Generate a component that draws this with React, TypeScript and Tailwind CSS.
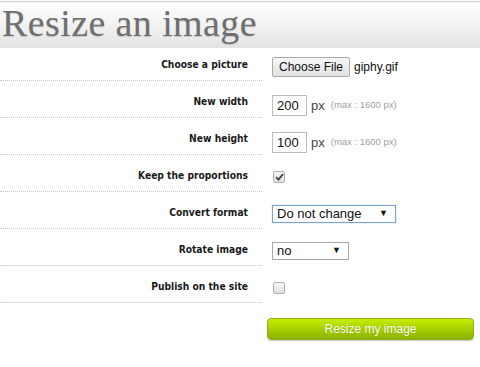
import React from "react";

const labelFont = { fontFamily: '"DejaVu Sans Condensed", "DejaVu Sans", sans-serif' };
const arial = { fontFamily: '"Liberation Sans", Arial, sans-serif' };

function Row({ label, first, children }: { label: string; first?: boolean; children?: React.ReactNode }) {
  return (
    <div className="flex">
      <div
        className={`w-[262px] shrink-0 flex items-center justify-end pr-[14px] border-b border-dotted border-[#c8c8c8] ${first ? "h-[33px] pt-[2px]" : "h-[37px] pt-[6px]"}`}
      >
        <span className="text-[10.2px] font-bold text-[#1a1a1a]" style={labelFont}>
          {label}
        </span>
      </div>
      <div className={`flex items-center pl-[10px] ${first ? "h-[33px] pt-[4px]" : "h-[37px] pt-[9px]"}`} style={arial}>
        {children}
      </div>
    </div>
  );
}

function Checkbox({ checked }: { checked?: boolean }) {
  return (
    <div className="w-[12px] h-[12px] rounded-[2px] border border-[#b0b0b0] bg-gradient-to-b from-[#f6f6f6] to-[#e0e0e0] flex items-center justify-center mt-[-3px] ml-[1px]">
      {checked && (
        <svg width="9" height="8" viewBox="0 0 9 8">
          <path d="M1 4.2 L3.4 6.6 L8 1.2" stroke="#444" strokeWidth="1.8" fill="none" />
        </svg>
      )}
    </div>
  );
}

function Select({ value, width, focused }: { value: string; width: string; focused?: boolean }) {
  return (
    <div
      className={`${width} h-[18px] flex items-center justify-between pl-[4px] pr-[7px] bg-white border ${focused ? "border-[#7da2ce] shadow-[0_0_1px_#9ebbe0]" : "border-[#a9a9a9]"} text-[13px] text-[#111] mt-[-3px]`}
    >
      <span className="leading-none">{value}</span>
      <span className="text-[9px] text-[#111]">▼</span>
    </div>
  );
}

function SizeInput({ value }: { value: string }) {
  return (
    <div className="flex items-center mt-[3px]">
      <div className="w-[35px] h-[21px] border border-[#bdbdbd] bg-white flex items-center pl-[4px] text-[13px] text-[#111]">
        {value}
      </div>
      <span className="ml-[4px] text-[13px] text-[#444]">px</span>
      <span className="ml-[6px] text-[9.5px] text-[#a0a0a0]">(max : 1600 px)</span>
    </div>
  );
}

export default function App() {
  return (
    <div className="w-[480px] h-[367px] bg-white overflow-hidden">
      <div className="h-[47px] border-t border-[#cfcfcf] mt-[1px] bg-gradient-to-b from-white to-[#e4e4e4] pl-[2px]">
        <h1
          className="text-[38px] leading-[42px] text-[#6f6f6f] tracking-[0.4px]"
          style={{ fontFamily: '"Liberation Serif", "Times New Roman", serif', textShadow: "0 1px 1px rgba(0,0,0,0.15)" }}
        >
          Resize an image
        </h1>
      </div>
      <Row label="Choose a picture" first>
        <div className="flex items-center">
          <div className="h-[20px] px-[6px] border border-[#a9a9a9] rounded-[2px] bg-gradient-to-b from-[#f7f7f7] to-[#e2e2e2] flex items-center text-[12px] text-[#111]">
            Choose File
          </div>
          <span className="ml-[4px] text-[12px] text-[#111]">giphy.gif</span>
        </div>
      </Row>
      <Row label="New width">
        <SizeInput value="200" />
      </Row>
      <Row label="New height">
        <SizeInput value="100" />
      </Row>
      <Row label="Keep the proportions">
        <Checkbox checked />
      </Row>
      <Row label="Convert format">
        <Select value="Do not change" width="w-[124px]" focused />
      </Row>
      <Row label="Rotate image">
        <Select value="no" width="w-[77px]" />
      </Row>
      <Row label="Publish on the site">
        <Checkbox />
      </Row>
      <div className="flex pl-[267px] pt-[15px]">
        <div
          className="w-[207px] h-[22px] rounded-[4px] border border-[#8fae1a] bg-gradient-to-b from-[#c6ee00] to-[#8bb300] flex items-center justify-center text-white text-[12px] shadow-[0_1px_1px_rgba(0,0,0,0.2)]"
          style={{ ...arial, textShadow: "0 0 1px rgba(0,0,0,0.25)" }}
        >
          Resize my image
        </div>
      </div>
    </div>
  );
}
